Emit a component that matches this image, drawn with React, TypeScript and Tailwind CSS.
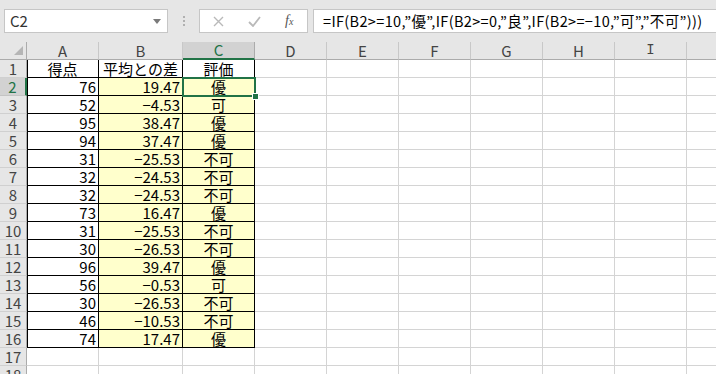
const cols = ['A', 'B', 'C', 'D', 'E', 'F', 'G', 'H', 'I', 'J'];

const rows = [
  { score: '76', diff: '19.47', grade: '優' },
  { score: '52', diff: '−4.53', grade: '可' },
  { score: '95', diff: '38.47', grade: '優' },
  { score: '94', diff: '37.47', grade: '優' },
  { score: '31', diff: '−25.53', grade: '不可' },
  { score: '32', diff: '−24.53', grade: '不可' },
  { score: '32', diff: '−24.53', grade: '不可' },
  { score: '73', diff: '16.47', grade: '優' },
  { score: '31', diff: '−25.53', grade: '不可' },
  { score: '30', diff: '−26.53', grade: '不可' },
  { score: '96', diff: '39.47', grade: '優' },
  { score: '56', diff: '−0.53', grade: '可' },
  { score: '30', diff: '−26.53', grade: '不可' },
  { score: '46', diff: '−10.53', grade: '不可' },
  { score: '74', diff: '17.47', grade: '優' },
];

const font = "font-['Noto_Sans_CJK_JP','Noto_Sans',sans-serif]";

function TopBar() {
  return (
    <div className="h-[42px] bg-[#e6e6e6] flex items-start pt-[9px] pl-[4px]">
      {/* name box */}
      <div className="w-[164px] h-[24px] bg-white border border-[#c6c6c6] flex items-center justify-between pl-[5px] pr-[6px]">
        <span className="text-[15px] leading-[20px] text-[#333]">C2</span>
        <svg width="8" height="5" viewBox="0 0 8 5">
          <path d="M0 0h8L4 5z" fill="#7a7a7a" />
        </svg>
      </div>
      {/* grip dots */}
      <div className="w-[31px] h-[24px] flex flex-col items-center justify-center gap-[2px]">
        <span className="w-[2px] h-[2px] bg-[#b0b0b0]" />
        <span className="w-[2px] h-[2px] bg-[#b0b0b0]" />
        <span className="w-[2px] h-[2px] bg-[#b0b0b0]" />
      </div>
      {/* cancel / enter / fx */}
      <div className="w-[109px] h-[24px] bg-white border border-[#c6c6c6] flex items-center pl-[13px] gap-[24px]">
        <svg width="11" height="11" viewBox="0 0 11 11">
          <path d="M1 1l9 9M10 1l-9 9" stroke="#b9b9b9" strokeWidth="1.4" />
        </svg>
        <svg width="13" height="11" viewBox="0 0 13 11">
          <path d="M1 6l4 4 7-9" stroke="#b9b9b9" strokeWidth="1.8" fill="none" />
        </svg>
        <span className="text-[14px] leading-[18px] italic text-[#555] font-['Liberation_Serif',serif]">
          f<span className="text-[10px]">x</span>
        </span>
      </div>
      {/* formula */}
      <div className="ml-[5px] flex-1 min-w-0 h-[24px] bg-white border border-[#c6c6c6] border-r-0 flex items-center pl-[9px]">
        <span className="text-[14.5px] leading-[20px] tracking-[0.35px] text-black whitespace-nowrap">
          =IF(B2&gt;=10,”優”,IF(B2&gt;=0,”良”,IF(B2&gt;=−10,”可”,”不可”)))
        </span>
      </div>
    </div>
  );
}

function Cell({
  children,
  align = 'end',
  table = false,
  fill = false,
  left = false,
}: {
  children?: React.ReactNode;
  align?: 'end' | 'center';
  table?: boolean;
  fill?: boolean;
  left?: boolean;
}) {
  return (
    <div
      className={
        'flex items-end leading-[17px] text-[15px] text-black whitespace-nowrap border-r border-b ' +
        (table ? 'border-black ' : 'border-[#d4d4d4] ') +
        (fill ? 'bg-[#ffffcc] ' : 'bg-white ') +
        (align === 'center' ? 'justify-center ' : 'justify-end pr-[2px] ') +
        (left ? 'shadow-[inset_1px_0_0_#000] ' : '')
      }
    >
      {children}
    </div>
  );
}

function RowHeader({ n, active = false }: { n: number; active?: boolean }) {
  return (
    <div
      className={
        'flex items-end justify-center leading-[17px] text-[15px] border-b ' +
        (active
          ? 'bg-[#d2d2d2] text-[#217346] border-b-[#c4c4c4] border-r-2 border-r-[#217346]'
          : 'bg-[#e6e6e6] text-[#444] border-b-[#d0d0d0] border-r border-r-[#ababab]')
      }
    >
      {n}
    </div>
  );
}

export default function App() {
  return (
    <div className={'w-[716px] h-[374px] overflow-hidden bg-white ' + font}>
      <TopBar />
      <div className="relative grid grid-cols-[27px_72px_84px_72px_72px_72px_72px_72px_72px_72px_72px] auto-rows-[18px]">
        {/* column headers */}
        <div className="bg-[#e6e6e6] border-r border-b border-[#ababab] flex items-end justify-end pr-[3px] pb-[4px]">
          <svg width="9" height="9" viewBox="0 0 9 9">
            <path d="M9 0v9H0z" fill="#b5b5b5" />
          </svg>
        </div>
        {cols.map((c) => (
          <div
            key={c}
            className={
              'flex items-end justify-center leading-[17px] text-[15px] ' +
              (c === 'C'
                ? 'bg-[#d2d2d2] text-[#217346] border-b-2 border-[#217346] border-r border-r-[#ababab]'
                : 'bg-[#e6e6e6] text-[#444] border-b border-b-[#ababab] border-r border-r-[#c8c8c8]')
            }
          >
            {c === 'I' ? <span className="font-['Liberation_Mono',monospace] text-[14px]">I</span> : c}
          </div>
        ))}

        {/* row 1 */}
        <RowHeader n={1} />
        <Cell align="center" table left>得点</Cell>
        <Cell align="center" table>平均との差</Cell>
        <Cell align="center" table>評価</Cell>
        {cols.slice(3).map((c) => (
          <Cell key={c} />
        ))}

        {rows.map((r, i) => (
          <div key={i} className="contents">
            <RowHeader n={i + 2} active={i === 0} />
            <Cell table left>{r.score}</Cell>
            <Cell table fill>{r.diff}</Cell>
            <Cell table fill align="center">{r.grade}</Cell>
            {cols.slice(3).map((c) => (
              <Cell key={c} />
            ))}
          </div>
        ))}

        {[17, 18].map((n) => (
          <div key={n} className="contents">
            <RowHeader n={n} />
            {cols.map((c) => (
              <Cell key={c} />
            ))}
          </div>
        ))}

        {/* active cell selection C2 */}
        <div className="absolute left-[182px] top-[35px] w-[74px] h-[20px] border-2 border-[#217346] pointer-events-none" />
        <div className="absolute left-[252px] top-[51px] w-[7px] h-[7px] bg-[#217346] border border-white" />
      </div>
    </div>
  );
}
